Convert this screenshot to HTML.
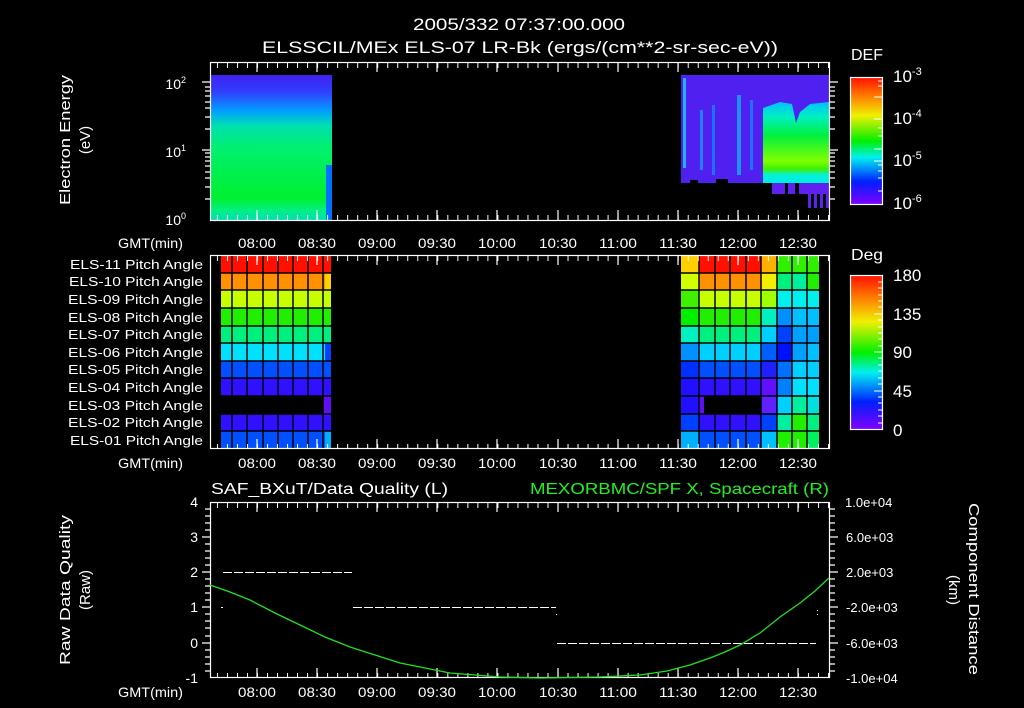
<!DOCTYPE html>
<html><head><meta charset="utf-8"><style>
html,body{margin:0;padding:0;background:#000;width:1024px;height:708px;overflow:hidden}
svg{display:block}
text{font-family:"Liberation Sans",sans-serif;fill:#fff}
</style></head><body>
<svg width="1024" height="708" viewBox="0 0 1024 708" xmlns="http://www.w3.org/2000/svg">
<defs>
<linearGradient id="cb" x1="0" y1="0" x2="0" y2="1">
<stop offset="0" stop-color="#ff1000"/><stop offset="0.15" stop-color="#ff8000"/><stop offset="0.3" stop-color="#f0f000"/><stop offset="0.5" stop-color="#00f000"/><stop offset="0.63" stop-color="#00f0f0"/><stop offset="0.82" stop-color="#0020ff"/><stop offset="1" stop-color="#8000ff"/>
</linearGradient>
<linearGradient id="lspec" x1="0" y1="0" x2="0" y2="1">
<stop offset="0" stop-color="#4020f0"/><stop offset="0.12" stop-color="#3040ff"/><stop offset="0.25" stop-color="#00a0ff"/><stop offset="0.35" stop-color="#00e0b0"/><stop offset="0.5" stop-color="#00f070"/><stop offset="0.85" stop-color="#00f030"/><stop offset="0.93" stop-color="#00f080"/><stop offset="1" stop-color="#00e0b0"/>
</linearGradient>
<linearGradient id="rgreen" x1="0" y1="0" x2="0" y2="1">
<stop offset="0" stop-color="#00c0ff"/><stop offset="0.2" stop-color="#00f0c0"/><stop offset="0.45" stop-color="#00f040"/><stop offset="0.8" stop-color="#80ff00"/><stop offset="0.9" stop-color="#40f000"/><stop offset="1" stop-color="#00f0f0"/>
</linearGradient>
<pattern id="tt" x="257" y="0" width="10.017" height="708" patternUnits="userSpaceOnUse"><rect x="0" y="0" width="1" height="708" fill="#fff"/></pattern>
</defs>

<!-- Titles -->
<text x="413" y="30" font-size="17" textLength="212" lengthAdjust="spacingAndGlyphs">2005/332 07:37:00.000</text>
<text x="262" y="53" font-size="17" textLength="516" lengthAdjust="spacingAndGlyphs">ELSSCIL/MEx ELS-07 LR-Bk  (ergs/(cm**2-sr-sec-eV))</text>

<!-- Panel 1 -->
<rect x="211" y="75" width="121" height="145" fill="url(#lspec)"/>
<rect x="326" y="165" width="6" height="55" fill="#0070ff"/>
<rect x="681" y="75" width="148" height="105" fill="#5020f0"/>
<rect x="683" y="78" width="3" height="90" fill="#20b0ff"/>
<rect x="700" y="110" width="3" height="60" fill="#2080ff"/>
<rect x="712" y="105" width="3" height="70" fill="#2070ff"/>
<rect x="737" y="95" width="4" height="80" fill="#2090ff"/>
<rect x="750" y="100" width="3" height="70" fill="#2070ff"/>
<path d="M763 176 L763 108 L780 102 L792 104 L796 123 L800 112 L810 104 L829 102 L829 176 Z" fill="url(#rgreen)"/>
<rect x="763" y="176" width="66" height="7" fill="#00f0e0"/>
<rect x="681" y="176" width="82" height="7" fill="#5020f0"/>
<rect x="690" y="180" width="8" height="4" fill="#000"/><rect x="716" y="179" width="12" height="5" fill="#000"/>
<rect x="772" y="183" width="57" height="11" fill="#6020f0"/>
<rect x="785" y="183" width="3" height="11" fill="#000"/><rect x="795" y="183" width="4" height="11" fill="#000"/>
<rect x="808" y="194" width="3" height="14" fill="#6020f0"/><rect x="814" y="194" width="3" height="14" fill="#6020f0"/><rect x="820" y="194" width="3" height="14" fill="#6020f0"/><rect x="826" y="194" width="3" height="14" fill="#6020f0"/>
<rect x="210.5" y="62.5" width="619" height="158" fill="none" stroke="#fff" stroke-width="1.2"/>
<rect x="210" y="63" width="620" height="5" fill="url(#tt)"/>
<rect x="210" y="215" width="620" height="5" fill="url(#tt)"/>
<g stroke="#fff" stroke-width="1.2">
<path d="M257 62v10M317 62v10M377 62v10M437 62v10M497 62v10M558 62v10M618 62v10M678 62v10M738 62v10M798 62v10"/>
<path d="M257 220v-10M317 220v-10M377 220v-10M437 220v-10M497 220v-10M558 220v-10M618 220v-10M678 220v-10M738 220v-10M798 220v-10"/>
<path d="M202 82h8M202 150h8M205 199h5M205 187h5M205 178h5M205 172h5M205 166h5M205 161h5M205 157h5M205 153h5M205 129h5M205 117h5M205 108h5M205 102h5M205 96h5M205 91h5M205 87h5"/>
<path d="M830 82h8M830 150h8M830 199h5M830 187h5M830 178h5M830 172h5M830 166h5M830 161h5M830 157h5M830 153h5M830 129h5M830 117h5M830 108h5M830 102h5M830 96h5M830 91h5M830 87h5"/>
</g>
<text x="186" y="89" font-size="14" text-anchor="end">10<tspan font-size="9" dy="-6">2</tspan></text>
<text x="186" y="157" font-size="14" text-anchor="end">10<tspan font-size="9" dy="-6">1</tspan></text>
<text x="186" y="225" font-size="14" text-anchor="end">10<tspan font-size="9" dy="-6">0</tspan></text>
<text transform="translate(70,205) rotate(-90)" font-size="15" textLength="130" lengthAdjust="spacingAndGlyphs">Electron Energy</text>
<text transform="translate(90,140) rotate(-90)" font-size="15" text-anchor="middle">(eV)</text>
<g font-size="14">
<text x="118" y="248" textLength="65" lengthAdjust="spacingAndGlyphs">GMT(min)</text>
<text x="238" y="248" textLength="38" lengthAdjust="spacingAndGlyphs">08:00</text><text x="298" y="248" textLength="38" lengthAdjust="spacingAndGlyphs">08:30</text><text x="358" y="248" textLength="38" lengthAdjust="spacingAndGlyphs">09:00</text><text x="418" y="248" textLength="38" lengthAdjust="spacingAndGlyphs">09:30</text><text x="478" y="248" textLength="38" lengthAdjust="spacingAndGlyphs">10:00</text><text x="539" y="248" textLength="38" lengthAdjust="spacingAndGlyphs">10:30</text><text x="599" y="248" textLength="38" lengthAdjust="spacingAndGlyphs">11:00</text><text x="659" y="248" textLength="38" lengthAdjust="spacingAndGlyphs">11:30</text><text x="719" y="248" textLength="38" lengthAdjust="spacingAndGlyphs">12:00</text><text x="779" y="248" textLength="38" lengthAdjust="spacingAndGlyphs">12:30</text>
</g>
<!-- colorbar 1 -->
<rect x="850.5" y="77.5" width="32" height="127" fill="url(#cb)" stroke="#fff" stroke-width="1.2"/>
<g stroke="#fff"><path d="M878 81h4M878 86h4M874 97h8M878 119h4M874 119h8M878 128h4M878 136h4M874 149h8M878 161h4M874 161h8M878 165h4M878 171h4M878 178h4M878 191h4"/></g>
<text x="851" y="60" font-size="16" textLength="32" lengthAdjust="spacingAndGlyphs">DEF</text>
<g font-size="17"><text x="893" y="82">10<tspan font-size="11" dy="-7">-3</tspan></text><text x="893" y="124">10<tspan font-size="11" dy="-7">-4</tspan></text><text x="893" y="166">10<tspan font-size="11" dy="-7">-5</tspan></text><text x="893" y="209">10<tspan font-size="11" dy="-7">-6</tspan></text></g>

<!-- Panel 2 -->
<g>
<rect x="221" y="255" width="110" height="18" fill="#ff1000"/>
<rect x="221" y="273" width="110" height="17" fill="#ff9000"/>
<rect x="221" y="290" width="110" height="18" fill="#c8ff00"/>
<rect x="221" y="308" width="110" height="18" fill="#20f000"/>
<rect x="221" y="326" width="110" height="17" fill="#00f080"/>
<rect x="221" y="343" width="110" height="18" fill="#00e0ff"/>
<rect x="221" y="361" width="110" height="17" fill="#0050ff"/>
<rect x="221" y="378" width="110" height="18" fill="#3010ff"/>
<rect x="323" y="396" width="8" height="18" fill="#6010f0"/>
<rect x="221" y="414" width="110" height="17" fill="#3010ff"/>
<rect x="221" y="431" width="110" height="18" fill="#0050ff"/>
<rect x="325" y="273" width="6" height="17" fill="#ffd000"/>
<rect x="325" y="343" width="6" height="18" fill="#0040ff"/>
<rect x="325" y="431" width="6" height="18" fill="#00b0ff"/>
</g>
<g>
<rect x="681" y="255" width="18" height="18" fill="#ffd000"/><rect x="699" y="255" width="62" height="18" fill="#ff1000"/><rect x="761" y="255" width="16" height="18" fill="#ffb000"/><rect x="777" y="255" width="42" height="18" fill="#30f000"/>
<rect x="681" y="273" width="18" height="17" fill="#d0ff00"/><rect x="699" y="273" width="62" height="17" fill="#ff9000"/><rect x="761" y="273" width="16" height="17" fill="#f0f000"/><rect x="777" y="273" width="15" height="17" fill="#00f080"/><rect x="792" y="273" width="15" height="17" fill="#00f0a0"/><rect x="807" y="273" width="12" height="17" fill="#20f000"/>
<rect x="681" y="290" width="18" height="18" fill="#40f000"/><rect x="699" y="290" width="62" height="18" fill="#c8ff00"/><rect x="761" y="290" width="16" height="18" fill="#a0ff00"/><rect x="777" y="290" width="42" height="18" fill="#00f0f0"/>
<rect x="681" y="308" width="18" height="18" fill="#00f000"/><rect x="699" y="308" width="62" height="18" fill="#20f000"/><rect x="761" y="308" width="16" height="18" fill="#00f0c0"/><rect x="777" y="308" width="15" height="18" fill="#0090ff"/><rect x="792" y="308" width="27" height="18" fill="#00c0ff"/>
<rect x="681" y="326" width="18" height="17" fill="#00f0c0"/><rect x="699" y="326" width="62" height="17" fill="#00f080"/><rect x="761" y="326" width="16" height="17" fill="#00d0ff"/><rect x="777" y="326" width="15" height="17" fill="#0040ff"/><rect x="792" y="326" width="27" height="17" fill="#00a0ff"/>
<rect x="681" y="343" width="18" height="18" fill="#0090ff"/><rect x="699" y="343" width="62" height="18" fill="#00d0ff"/><rect x="761" y="343" width="16" height="18" fill="#0060ff"/><rect x="777" y="343" width="15" height="18" fill="#0010ff"/><rect x="792" y="343" width="15" height="18" fill="#00a0ff"/><rect x="807" y="343" width="12" height="18" fill="#00c0ff"/>
<rect x="681" y="361" width="18" height="17" fill="#0030ff"/><rect x="699" y="361" width="62" height="17" fill="#0050ff"/><rect x="761" y="361" width="16" height="17" fill="#2020ff"/><rect x="777" y="361" width="15" height="17" fill="#0070ff"/><rect x="792" y="361" width="27" height="17" fill="#00d0ff"/>
<rect x="681" y="378" width="18" height="18" fill="#2010ff"/><rect x="699" y="378" width="62" height="18" fill="#3010ff"/><rect x="761" y="378" width="16" height="18" fill="#6010ff"/><rect x="777" y="378" width="15" height="18" fill="#0080ff"/><rect x="792" y="378" width="27" height="18" fill="#00e0ff"/>
<rect x="681" y="396" width="18" height="18" fill="#2010ff"/><rect x="699" y="396" width="5" height="18" fill="#6010f0"/><rect x="761" y="396" width="16" height="18" fill="#6020ff"/><rect x="777" y="396" width="15" height="18" fill="#00d0ff"/><rect x="792" y="396" width="15" height="18" fill="#00f0a0"/><rect x="807" y="396" width="12" height="18" fill="#00e0e0"/>
<rect x="681" y="414" width="18" height="17" fill="#0040ff"/><rect x="699" y="414" width="62" height="17" fill="#3010ff"/><rect x="761" y="414" width="16" height="17" fill="#0040ff"/><rect x="777" y="414" width="15" height="17" fill="#00f0a0"/><rect x="792" y="414" width="15" height="17" fill="#20f000"/><rect x="807" y="414" width="12" height="17" fill="#00f080"/>
<rect x="681" y="431" width="18" height="18" fill="#00b0ff"/><rect x="699" y="431" width="62" height="18" fill="#0050ff"/><rect x="761" y="431" width="16" height="18" fill="#00c0ff"/><rect x="777" y="431" width="15" height="18" fill="#20f000"/><rect x="792" y="431" width="15" height="18" fill="#20f000"/><rect x="807" y="431" width="12" height="18" fill="#00f060"/>
</g>
<g stroke="#000" stroke-width="1.5">
<path d="M221 273H331M221 290H331M221 308H331M221 326H331M221 343H331M221 361H331M221 378H331M221 396H331M221 414H331M221 431H331"/>
<path d="M232 255V449M247 255V449M263 255V449M278 255V449M293 255V449M308 255V449M323 255V449"/>
<path d="M681 273H819M681 290H819M681 308H819M681 326H819M681 343H819M681 361H819M681 378H819M681 396H819M681 414H819M681 431H819"/>
<path d="M699 255V449M715 255V449M730 255V449M746 255V449M761 255V449M777 255V449M792 255V449M807 255V449"/>
</g>
<rect x="210.5" y="255.5" width="619" height="193" fill="none" stroke="#fff" stroke-width="1.2"/>
<rect x="210" y="256" width="620" height="5" fill="url(#tt)"/>
<rect x="210" y="444" width="620" height="5" fill="url(#tt)"/>
<g stroke="#fff" stroke-width="1.2">
<path d="M257 255v10M317 255v10M377 255v10M437 255v10M497 255v10M558 255v10M618 255v10M678 255v10M738 255v10M798 255v10"/>
<path d="M257 449v-10M317 449v-10M377 449v-10M437 449v-10M497 449v-10M558 449v-10M618 449v-10M678 449v-10M738 449v-10M798 449v-10"/>
</g>
<g font-size="13">
<text x="70" y="269" textLength="133" lengthAdjust="spacingAndGlyphs">ELS-11 Pitch Angle</text><text x="69" y="286" textLength="134" lengthAdjust="spacingAndGlyphs">ELS-10 Pitch Angle</text><text x="68" y="304" textLength="135" lengthAdjust="spacingAndGlyphs">ELS-09 Pitch Angle</text><text x="68" y="322" textLength="135" lengthAdjust="spacingAndGlyphs">ELS-08 Pitch Angle</text><text x="68" y="339" textLength="135" lengthAdjust="spacingAndGlyphs">ELS-07 Pitch Angle</text><text x="68" y="357" textLength="135" lengthAdjust="spacingAndGlyphs">ELS-06 Pitch Angle</text><text x="68" y="374" textLength="135" lengthAdjust="spacingAndGlyphs">ELS-05 Pitch Angle</text><text x="68" y="392" textLength="135" lengthAdjust="spacingAndGlyphs">ELS-04 Pitch Angle</text><text x="68" y="410" textLength="135" lengthAdjust="spacingAndGlyphs">ELS-03 Pitch Angle</text><text x="68" y="427" textLength="135" lengthAdjust="spacingAndGlyphs">ELS-02 Pitch Angle</text><text x="70" y="445" textLength="133" lengthAdjust="spacingAndGlyphs">ELS-01 Pitch Angle</text>
</g>
<g font-size="14">
<text x="118" y="468" textLength="65" lengthAdjust="spacingAndGlyphs">GMT(min)</text>
<text x="238" y="468" textLength="38" lengthAdjust="spacingAndGlyphs">08:00</text><text x="298" y="468" textLength="38" lengthAdjust="spacingAndGlyphs">08:30</text><text x="358" y="468" textLength="38" lengthAdjust="spacingAndGlyphs">09:00</text><text x="418" y="468" textLength="38" lengthAdjust="spacingAndGlyphs">09:30</text><text x="478" y="468" textLength="38" lengthAdjust="spacingAndGlyphs">10:00</text><text x="539" y="468" textLength="38" lengthAdjust="spacingAndGlyphs">10:30</text><text x="599" y="468" textLength="38" lengthAdjust="spacingAndGlyphs">11:00</text><text x="659" y="468" textLength="38" lengthAdjust="spacingAndGlyphs">11:30</text><text x="719" y="468" textLength="38" lengthAdjust="spacingAndGlyphs">12:00</text><text x="779" y="468" textLength="38" lengthAdjust="spacingAndGlyphs">12:30</text>
</g>
<rect x="850.5" y="275.5" width="32" height="154" fill="url(#cb)" stroke="#fff" stroke-width="1.2"/>
<g stroke="#fff"><path d="M878 282h4M878 288h4M878 295h4M878 301h4M878 307h4M874 314h8M878 320h4M878 327h4M878 333h4M878 339h4M878 346h4M874 352h8M878 358h4M878 365h4M878 371h4M878 378h4M878 384h4M874 391h8M878 397h4M878 403h4M878 410h4M878 416h4M878 423h4"/></g>
<text x="851" y="260" font-size="16" textLength="32" lengthAdjust="spacingAndGlyphs">Deg</text>
<g font-size="17"><text x="893" y="281">180</text><text x="893" y="320">135</text><text x="893" y="358">90</text><text x="893" y="397">45</text><text x="893" y="436">0</text></g>

<!-- Panel 3 -->
<text x="211" y="494" font-size="16" textLength="237" lengthAdjust="spacingAndGlyphs">SAF_BXuT/Data Quality (L)</text>
<text x="530" y="494" font-size="16" textLength="299" lengthAdjust="spacingAndGlyphs" style="fill:#20f020">MEXORBMC/SPF X, Spacecraft (R)</text>
<rect x="210.5" y="502.5" width="619" height="175" fill="none" stroke="#fff" stroke-width="1.2"/>
<rect x="210" y="503" width="620" height="5" fill="url(#tt)"/>
<rect x="210" y="673" width="620" height="5" fill="url(#tt)"/>
<g stroke="#fff" stroke-width="1.2">
<path d="M257 502v10M317 502v10M377 502v10M437 502v10M497 502v10M558 502v10M618 502v10M678 502v10M738 502v10M798 502v10"/>
<path d="M257 678v-10M317 678v-10M377 678v-10M437 678v-10M497 678v-10M558 678v-10M618 678v-10M678 678v-10M738 678v-10M798 678v-10"/>
<path d="M202 537h8M202 572h8M202 607h8M202 643h8M205 509h5M205 516h5M205 523h5M205 530h5M205 544h5M205 551h5M205 558h5M205 565h5M205 579h5M205 586h5M205 593h5M205 600h5M205 614h5M205 621h5M205 628h5M205 636h5M205 650h5M205 657h5M205 664h5M205 671h5"/>
<path d="M830 537h8M830 572h8M830 607h8M830 643h8M830 509h5M830 516h5M830 523h5M830 530h5M830 544h5M830 551h5M830 558h5M830 565h5M830 579h5M830 586h5M830 593h5M830 600h5M830 614h5M830 621h5M830 628h5M830 636h5M830 650h5M830 657h5M830 664h5M830 671h5"/>
</g>
<g stroke="#fff" stroke-width="1" stroke-dasharray="9,2">
<path d="M223 572.5H352M353 607.5H556M557 643.5H816"/>
</g>
<rect x="221" y="607" width="2" height="1" fill="#fff"/><rect x="556" y="614" width="1" height="1" fill="#fff"/><rect x="817" y="610" width="1" height="1" fill="#fff"/><rect x="817" y="614" width="1" height="1" fill="#fff"/>
<polyline points="210,585 230,592 250,600 275,613 300,625 325,637 350,647 375,655 400,663 425,668 450,673 475,675 500,677 540,678 600,677 640,675 667,671 690,665 710,658 725,652 740,645 760,633 780,617 800,603 815,591 829,578" fill="none" stroke="#20e020" stroke-width="1.3"/>
<g font-size="14" text-anchor="end"><text x="198" y="507">4</text><text x="198" y="542">3</text><text x="198" y="577">2</text><text x="198" y="612">1</text><text x="198" y="648">0</text><text x="198" y="683">-1</text></g>
<g font-size="13"><text x="845" y="507">1.0e+04</text><text x="846" y="542">6.0e+03</text><text x="846" y="577">2.0e+03</text><text x="846" y="612">-2.0e+03</text><text x="846" y="648">-6.0e+03</text><text x="846" y="683">-1.0e+04</text></g>
<text transform="translate(70,665) rotate(-90)" font-size="15" textLength="150" lengthAdjust="spacingAndGlyphs">Raw Data Quality</text>
<text transform="translate(90,590) rotate(-90)" font-size="15" text-anchor="middle">(Raw)</text>
<text transform="translate(969,503) rotate(90)" font-size="15" textLength="172" lengthAdjust="spacingAndGlyphs">Component Distance</text>
<text transform="translate(949,590) rotate(90)" font-size="15" text-anchor="middle">(km)</text>
<g font-size="14">
<text x="118" y="697" textLength="65" lengthAdjust="spacingAndGlyphs">GMT(min)</text>
<text x="238" y="697" textLength="38" lengthAdjust="spacingAndGlyphs">08:00</text><text x="298" y="697" textLength="38" lengthAdjust="spacingAndGlyphs">08:30</text><text x="358" y="697" textLength="38" lengthAdjust="spacingAndGlyphs">09:00</text><text x="418" y="697" textLength="38" lengthAdjust="spacingAndGlyphs">09:30</text><text x="478" y="697" textLength="38" lengthAdjust="spacingAndGlyphs">10:00</text><text x="539" y="697" textLength="38" lengthAdjust="spacingAndGlyphs">10:30</text><text x="599" y="697" textLength="38" lengthAdjust="spacingAndGlyphs">11:00</text><text x="659" y="697" textLength="38" lengthAdjust="spacingAndGlyphs">11:30</text><text x="719" y="697" textLength="38" lengthAdjust="spacingAndGlyphs">12:00</text><text x="779" y="697" textLength="38" lengthAdjust="spacingAndGlyphs">12:30</text>
</g>
</svg>
</body></html>
